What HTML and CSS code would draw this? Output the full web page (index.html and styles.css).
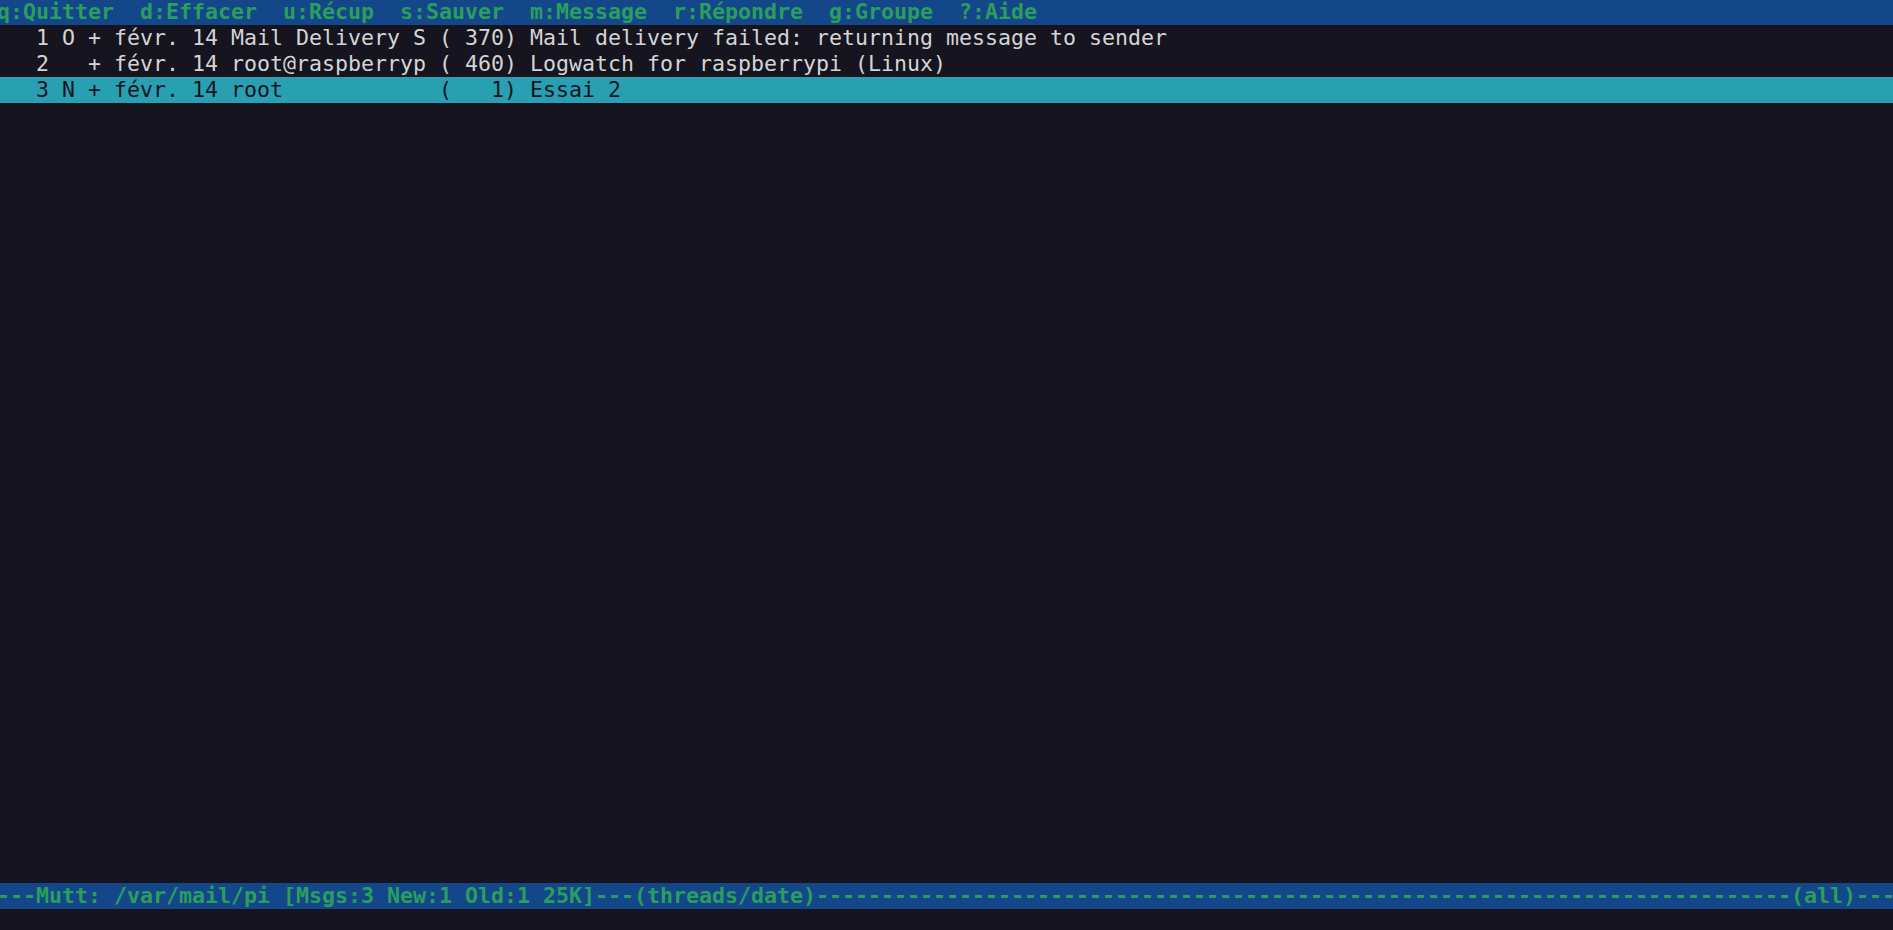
FILE: index.html
```html
<!DOCTYPE html>
<html lang="fr">
<head>
    <meta charset="UTF-8">
    <title>Mutt - /var/mail/pi</title>
    <link rel="stylesheet" href="styles.css">
</head>
<body>
    <div class="screen">
        <div class="bar help">q:Quitter  d:Effacer  u:Récup  s:Sauver  m:Message  r:Répondre  g:Groupe  ?:Aide</div>

        <div class="index">
            <div class="row">   1 O + févr. 14 Mail Delivery S ( 370) Mail delivery failed: returning message to sender</div>
            <div class="row">   2   + févr. 14 root@raspberryp ( 460) Logwatch for raspberrypi (Linux)</div>
            <div class="row current">   3 N + févr. 14 root            (   1) Essai 2</div>
        </div>

        <div class="bar status">---Mutt: /var/mail/pi [Msgs:3 New:1 Old:1 25K]---(threads/date)---------------------------------------------------------------------------(all)---</div>
        <div class="msgline"></div>
    </div>
</body>
</html>
```

FILE: styles.css
```css
* {
    margin: 0;
    padding: 0;
    box-sizing: border-box;
}

body {
    background-color: #16151f;
    overflow: hidden;
}

/* terminal grid: 146 cols x 36 rows of 26px */
.screen {
    height: 936px;
    margin-top: -1px;
    display: flex;
    flex-direction: column;
    font-family: 'DejaVu Sans Mono', monospace;
    font-size: 21.6px;
    line-height: 26px;
    color: #d4d4d6;
}

.bar,
.row,
.msgline {
    height: 26px;
    text-indent: -3px;
    white-space: pre;
    overflow: hidden;
}

.bar {
    background-color: #14478a;
    color: #2a9e5c;
    font-weight: bold;
}

.index {
    flex: 1;
}

.row.current {
    background-color: #29a0b2;
    color: #16151f;
}
```
